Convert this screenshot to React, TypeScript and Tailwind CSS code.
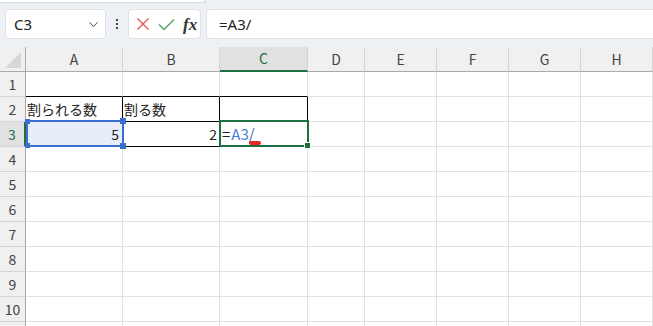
import { ChevronDown } from 'lucide-react';

const cols = [
  { label: '', w: 'w-[26px]' },
  { label: 'A', w: 'w-[97px]' },
  { label: 'B', w: 'w-[97px]' },
  { label: 'C', w: 'w-[88px]' },
  { label: 'D', w: 'w-[57px]' },
  { label: 'E', w: 'w-[72px]' },
  { label: 'F', w: 'w-[72px]' },
  { label: 'G', w: 'w-[72px]' },
  { label: 'H', w: 'w-[72px]' },
];

const rows = [1, 2, 3, 4, 5, 6, 7, 8, 9, 10, 11];

// cells inside A1:C3 that carry the black table border
function cellBorder(row: number, col: number) {
  const inTable = col >= 1 && col <= 3;
  const right = inTable && row >= 2 && row <= 3 ? 'border-r-black' : 'border-r-[#e1e1e1]';
  const bottom = inTable && row >= 1 && row <= 3 ? 'border-b-black' : 'border-b-[#e1e1e1]';
  return `${right} ${bottom}`;
}

function cellContent(row: number, col: number) {
  if (row === 2 && col === 1) return <span className="pl-[1px]">割られる数</span>;
  if (row === 2 && col === 2) return <span className="pl-[1px]">割る数</span>;
  if (row === 3 && col === 1) return <span className="ml-auto pr-[3px]">5</span>;
  if (row === 3 && col === 2) return <span className="ml-auto pr-[2px]">2</span>;
  if (row === 3 && col === 3)
    return (
      <span className="relative pl-[2px] text-[15px]">
        <span className="mr-[1px] text-[#222]">=</span>
        <span className="text-[#4a7fd6]">A3</span>
        <span className="text-[#3d5fa8]">/</span>
        <span className="absolute left-[29px] top-[18px] h-[4px] w-[12px] rounded-full bg-[#e8232a]" />
      </span>
    );
  return null;
}

export default function App() {
  return (
    <div
      className="relative h-[326px] w-[653px] overflow-hidden bg-white text-[#222]"
      style={{ fontFamily: '"Noto Sans CJK JP", "Noto Sans", sans-serif' }}
    >
      {/* formula bar */}
      <div className="relative h-[47px] bg-[#edf0f4]">
        <div className="h-[3px] w-[206px] rounded-br-[4px] border-b border-r border-[#d6d9dd] bg-white" />
        <div className="flex items-center pl-[5px] pt-[6px]">
          <div className="flex h-[30px] w-[101px] items-center justify-between rounded-[4px] border border-[#dfe1e4] bg-white pl-[8px] pr-[4px]">
            <span className="text-[15px] leading-none text-[#222]" style={{ fontFamily: '"Noto Sans", sans-serif' }}>
              C3
            </span>
            <ChevronDown className="h-[15px] w-[15px] text-[#444]" strokeWidth={1.6} />
          </div>
          <div className="flex w-[22px] flex-col items-center gap-[2px]">
            <span className="h-[2px] w-[2px] bg-[#444]" />
            <span className="h-[2px] w-[2px] bg-[#444]" />
            <span className="h-[2px] w-[2px] bg-[#444]" />
          </div>
          <div className="flex h-[30px] w-[73px] items-center rounded-[4px] border border-[#dfe1e4] bg-white pl-[5px]">
            <svg width="14" height="14" viewBox="0 0 14 14" className="ml-[2px]">
              <path d="M1.5 1.5 L12.5 12.5 M12.5 1.5 L1.5 12.5" stroke="#e0575a" strokeWidth="1.4" fill="none" />
            </svg>
            <svg width="17" height="13" viewBox="0 0 17 13" className="ml-[8px]">
              <path d="M1 6.5 L6 11.5 L16 1.5" stroke="#56a766" strokeWidth="1.5" fill="none" />
            </svg>
            <span
              className="ml-[8px] text-[17px] font-bold italic leading-none text-[#333]"
              style={{ fontFamily: '"Liberation Serif", serif' }}
            >
              fx
            </span>
          </div>
          <div className="ml-[5px] flex h-[30px] flex-1 items-center rounded-l-[4px] border border-r-0 border-[#dfe1e4] bg-white pl-[12px]">
            <span className="text-[15px] leading-none text-[#222]" style={{ fontFamily: '"Noto Sans", sans-serif' }}>
              =A3/
            </span>
          </div>
        </div>
      </div>

      {/* column headers */}
      <div className="flex h-[25px]">
        {cols.map((c, i) => (
          <div
            key={i}
            className={`${c.w} flex shrink-0 items-center justify-center border-b text-[14px] ${
              i === 0
                ? 'border-r border-r-[#a9a9a9] border-b-[#a9a9a9] bg-[#f0f0f0]'
                : i === 3
                  ? 'border-r border-r-[#d4d4d4] border-b-2 border-b-[#1e6e42] bg-[#e1e1e1] text-[#1e6e42]'
                  : 'border-r border-r-[#d4d4d4] border-b-[#a9a9a9] bg-[#f0f0f0] text-[#444]'
            }`}
          >
            {i === 0 ? (
              <svg width="18" height="18" viewBox="0 0 18 18" className="ml-[1px] mt-[2px]">
                <path d="M17 1 L17 17 L1 17 Z" fill="#d7d7d7" />
              </svg>
            ) : (
              c.label
            )}
          </div>
        ))}
      </div>

      {/* rows */}
      {rows.map((r) => (
        <div key={r} className="flex h-[25px]">
          {cols.map((c, i) =>
            i === 0 ? (
              <div
                key={i}
                className={`${c.w} flex shrink-0 items-center justify-center border-b border-r text-[14px] ${
                  r === 3
                    ? 'border-r-2 border-r-[#1e6e42] border-b-[#d4d4d4] bg-[#e1e1e1] text-[#1e6e42]'
                    : 'border-r-[#a9a9a9] border-b-[#d4d4d4] bg-[#f0f0f0] text-[#444]'
                }`}
              >
                {r <= 10 ? r : null}
              </div>
            ) : (
              <div
                key={i}
                className={`${c.w} flex shrink-0 items-center overflow-visible whitespace-nowrap border-b border-r text-[14px] ${cellBorder(
                  r,
                  i
                )} ${r === 3 && i === 1 ? 'bg-[#e8eef9]' : ''}`}
              >
                {cellContent(r, i)}
              </div>
            )
          )}
        </div>
      ))}

      {/* range reference highlight on A3 */}
      <div className="pointer-events-none absolute left-[26px] top-[120px] h-[27px] w-[98px] border-2 border-[#3b6fcf]">
        <span className="absolute -left-[3px] -top-[3px] h-[5px] w-[5px] bg-[#3b6fcf]" />
        <span className="absolute -right-[4px] -top-[4px] h-[6px] w-[6px] bg-[#3b6fcf]" />
        <span className="absolute -bottom-[3px] -left-[3px] h-[5px] w-[5px] bg-[#3b6fcf]" />
        <span className="absolute -bottom-[4px] -right-[4px] h-[6px] w-[6px] bg-[#3b6fcf]" />
      </div>

      {/* active cell C3 */}
      <div className="pointer-events-none absolute left-[219px] top-[120px] h-[27px] w-[90px] border-2 border-[#1e6e42]">
        <span className="absolute -bottom-[4px] -right-[4px] h-[7px] w-[7px] border border-white bg-[#1e6e42]" />
      </div>
    </div>
  );
}
